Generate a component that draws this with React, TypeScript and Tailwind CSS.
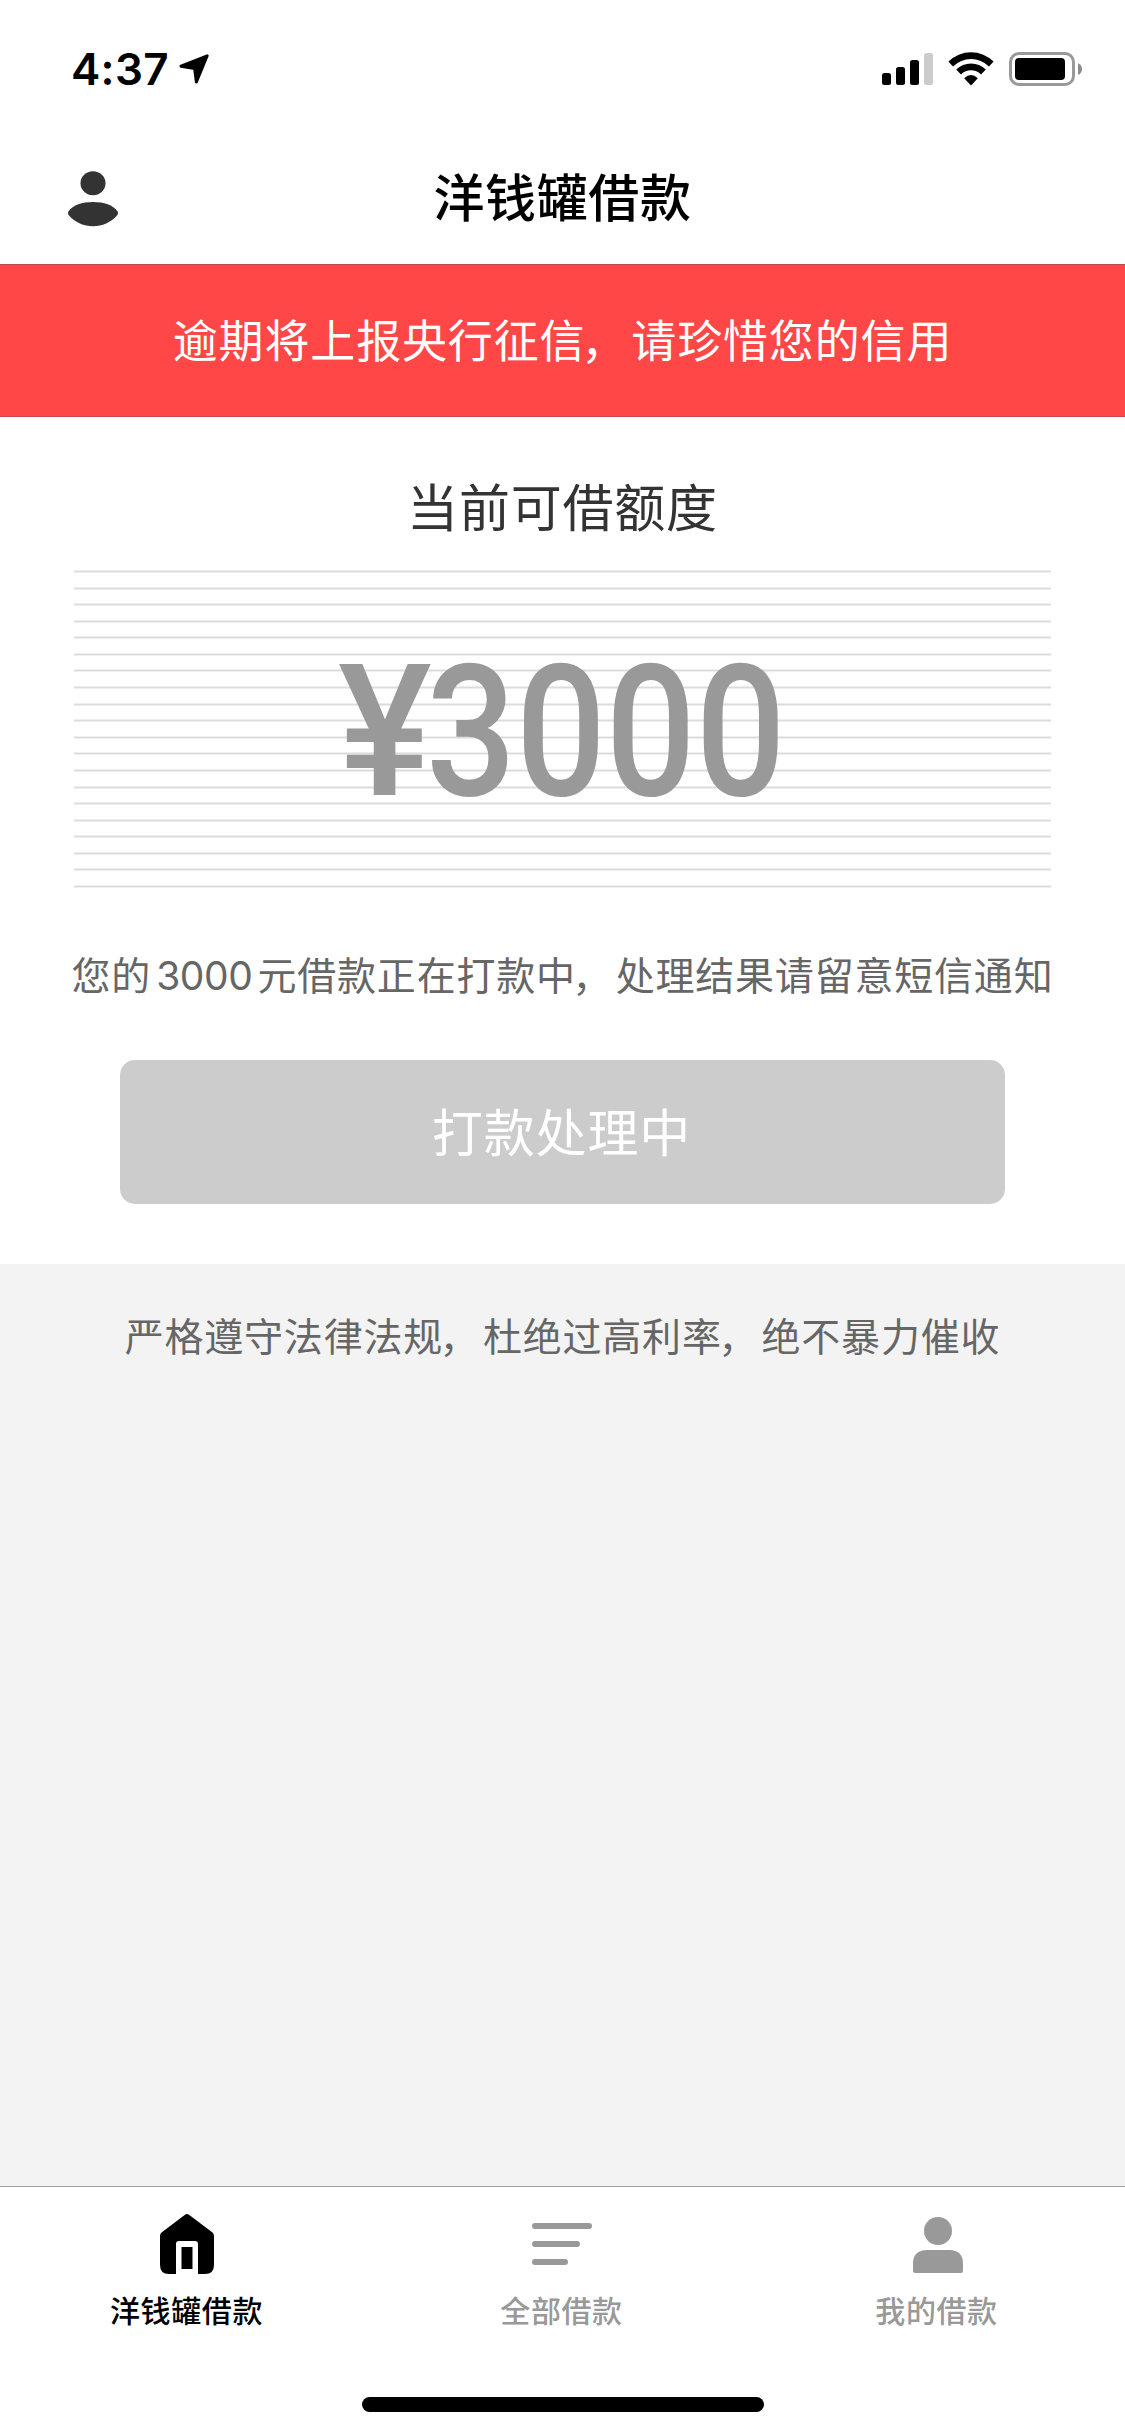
import type { ReactNode } from 'react';

const LINE_COUNT = 20;

// Full-width comma, hugging the preceding character
function Comma() {
  return <span className="inline-block -translate-x-[0.09em] translate-y-[0.03em]">，</span>;
}

function StatusBar() {
  return (
    <div className="flex h-[132px] items-start justify-between pt-[44px] pr-[43px] pl-[71px]">
      <div className="flex h-[50px] items-center font-['Inter',sans-serif]">
        <span className="w-[108px] text-[44px] leading-[50px] font-semibold tracking-[0.3px] text-black">4:37</span>
        <svg width="30" height="30" viewBox="0 0 30 30">
          <path
            d="M28.2 1.8 2 12.2 15.6 14.4 17.4 28Z"
            fill="#000"
            stroke="#000"
            strokeWidth="3"
            strokeLinejoin="round"
          />
        </svg>
      </div>

      <div className="flex h-[50px] items-center">
        {/* Signal */}
        <svg width="51" height="32" viewBox="0 0 51 32" className="mr-[15px]">
          <rect x="0" y="20" width="9" height="12" rx="2.5" />
          <rect x="14" y="14" width="9" height="18" rx="2.5" />
          <rect x="28" y="7" width="9" height="25" rx="2.5" />
          <rect x="42" y="0" width="9" height="32" rx="2.5" fill="#ccc" />
        </svg>
        {/* Wifi */}
        <svg width="46" height="34" viewBox="0 0 46 34" className="mr-[15px]">
          <path d="M0.4 9.6A32 32 0 0 1 45.6 9.6L41 14.4A25.6 25.6 0 0 0 5 14.4Z" />
          <path d="M8.2 17.6A21 21 0 0 1 37.8 17.6L33 22.4A14.4 14.4 0 0 0 13 22.4Z" />
          <path d="M16.2 26.2Q23 20 29.8 26.2L23 33.4Z" />
        </svg>
        {/* Battery */}
        <svg width="73" height="34" viewBox="0 0 73 34">
          <rect x="1.5" y="1.5" width="63" height="31" rx="8.5" fill="none" stroke="#999" strokeWidth="3" />
          <rect x="6" y="6" width="50" height="22" rx="4" />
          <path d="M69 11Q73 13 73 17T69 23Z" fill="#8c8c8c" />
        </svg>
      </div>
    </div>
  );
}

function NavBar() {
  return (
    <header className="grid h-[132px] grid-cols-[186px_1fr_186px] items-center">
      <button type="button" className="pt-[2px] pl-[68px]" aria-label="账户">
        <svg width="50" height="56" viewBox="0 0 50 56" fill="#333">
          <ellipse cx="25" cy="12.3" rx="12.5" ry="12" />
          <path d="M0.6 40.2C5 34 14 31 25 31S45 34 49.4 40.2Q50.6 42 49.4 44C43 51.5 34 55.3 25 55.3S7 51.5 0.6 44Q-0.6 42 0.6 40.2Z" />
        </svg>
      </button>
      <h1 className="pb-[6px] text-center text-[51px] leading-[72px] font-medium tracking-[0.6px] text-black">
        洋钱罐借款
      </h1>
    </header>
  );
}

function CreditPanel() {
  return (
    <section className="flex h-[847px] flex-col items-center bg-white">
      <h2 className="mt-[50px] h-[76px] text-[51px] leading-[76px] tracking-[0.8px] text-[#333]">
        当前可借额度
      </h2>

      <div className="mt-[27px] grid h-[318px] w-[977px]">
        <div className="col-start-1 row-start-1 flex flex-col justify-between">
          {Array.from({ length: LINE_COUNT }, (_, i) => (
            <div key={i} className="h-[3px] border-y border-[#ededed] bg-[#dcdcdc]" />
          ))}
        </div>
        <div className="z-10 col-start-1 row-start-1 flex h-[318px] items-center pt-[5px] pl-[264px] font-['Roboto',sans-serif] text-[184px] leading-[318px] font-medium text-[#999]">
          <span className="block w-[88px] origin-left scale-x-[0.96]">¥</span>
          <span className="block origin-left scale-x-[0.86]">3000</span>
        </div>
      </div>

      <p className="mt-[55px] flex h-[60px] items-baseline text-[39px] leading-[60px] tracking-[0.8px] whitespace-nowrap text-[#666]">
        <span>您的</span>
        <span className="mr-[5px] ml-[5px] font-['Inter',sans-serif] tracking-[-0.4px]">3000</span>
        <span>
          元借款正在打款中
          <Comma />
          处理结果请留意短信通知
        </span>
      </p>

      <button
        type="button"
        className="mt-[57px] h-[144px] w-[885px] rounded-[15px] bg-[#ccc] pr-[2px] pb-[4px] text-[51px] leading-[140px] tracking-[0.8px] text-white"
      >
        打款处理中
      </button>
    </section>
  );
}

interface TabProps {
  label: string;
  active?: boolean;
  children: ReactNode;
}

function Tab({ label, active = false, children }: TabProps) {
  return (
    <a
      className={`flex flex-1 flex-col items-center pr-[2px] text-[30px] leading-[44px] font-medium tracking-[0.6px] ${
        active ? 'text-black' : 'text-[#999]'
      }`}
    >
      <span className="mt-[27px] h-[60px]">{children}</span>
      <span className="mt-[13px]">{label}</span>
    </a>
  );
}

function TabBar() {
  return (
    <nav className="flex h-[250px] flex-col border-t border-[#a0a0a0] bg-white">
      <div className="flex h-[210px]">
        <Tab label="洋钱罐借款" active>
          <svg width="54" height="60" viewBox="0 0 54 60" fill="currentColor">
            <path d="M25 0.8Q27 -0.6 29 0.8L52.5 18.5Q54 19.8 54 22V51Q54 60 45 60H38V30Q38 27 35 27H19Q16 27 16 30V60H9Q0 60 0 51V22Q0 19.8 1.5 18.5Z" />
            <path d="M21.5 33H32.5V55H21.5Z" />
          </svg>
        </Tab>
        <Tab label="全部借款">
          <svg width="60" height="60" viewBox="0 0 60 60" fill="currentColor">
            <rect x="0" y="9" width="60" height="6" rx="3" />
            <rect x="0" y="27" width="48" height="6" rx="3" />
            <rect x="0" y="45" width="36" height="6" rx="3" />
          </svg>
        </Tab>
        <Tab label="我的借款">
          <svg width="52" height="60" viewBox="-2 0 52 60" fill="currentColor">
            <circle cx="25" cy="17" r="14" />
            <path d="M0 50Q0 36 14 36H36Q50 36 50 50V56.5Q50 59 47.5 59H2.5Q0 59 0 56.5Z" />
          </svg>
        </Tab>
      </div>
      <div className="mx-auto h-[15px] w-[402px] rounded-full bg-black" />
    </nav>
  );
}

export default function App() {
  return (
    <div className="flex h-[2436px] w-[1125px] flex-col bg-[#f3f3f3] font-['Noto_Sans_CJK_SC',sans-serif]">
      <div className="bg-white">
        <StatusBar />
        <NavBar />
      </div>

      <div className="h-[153px] border-y border-[#c14a4c] bg-[#ff4747] text-center text-[45px] leading-[148px] tracking-[0.85px] text-white">
        逾期将上报央行征信
        <Comma />
        请珍惜您的信用
      </div>

      <CreditPanel />

      <p className="flex-1 pt-[40px] text-center text-[39px] leading-[60px] tracking-[0.8px] text-[#666]">
        严格遵守法律法规
        <Comma />
        杜绝过高利率
        <Comma />
        绝不暴力催收
      </p>

      <TabBar />
    </div>
  );
}
